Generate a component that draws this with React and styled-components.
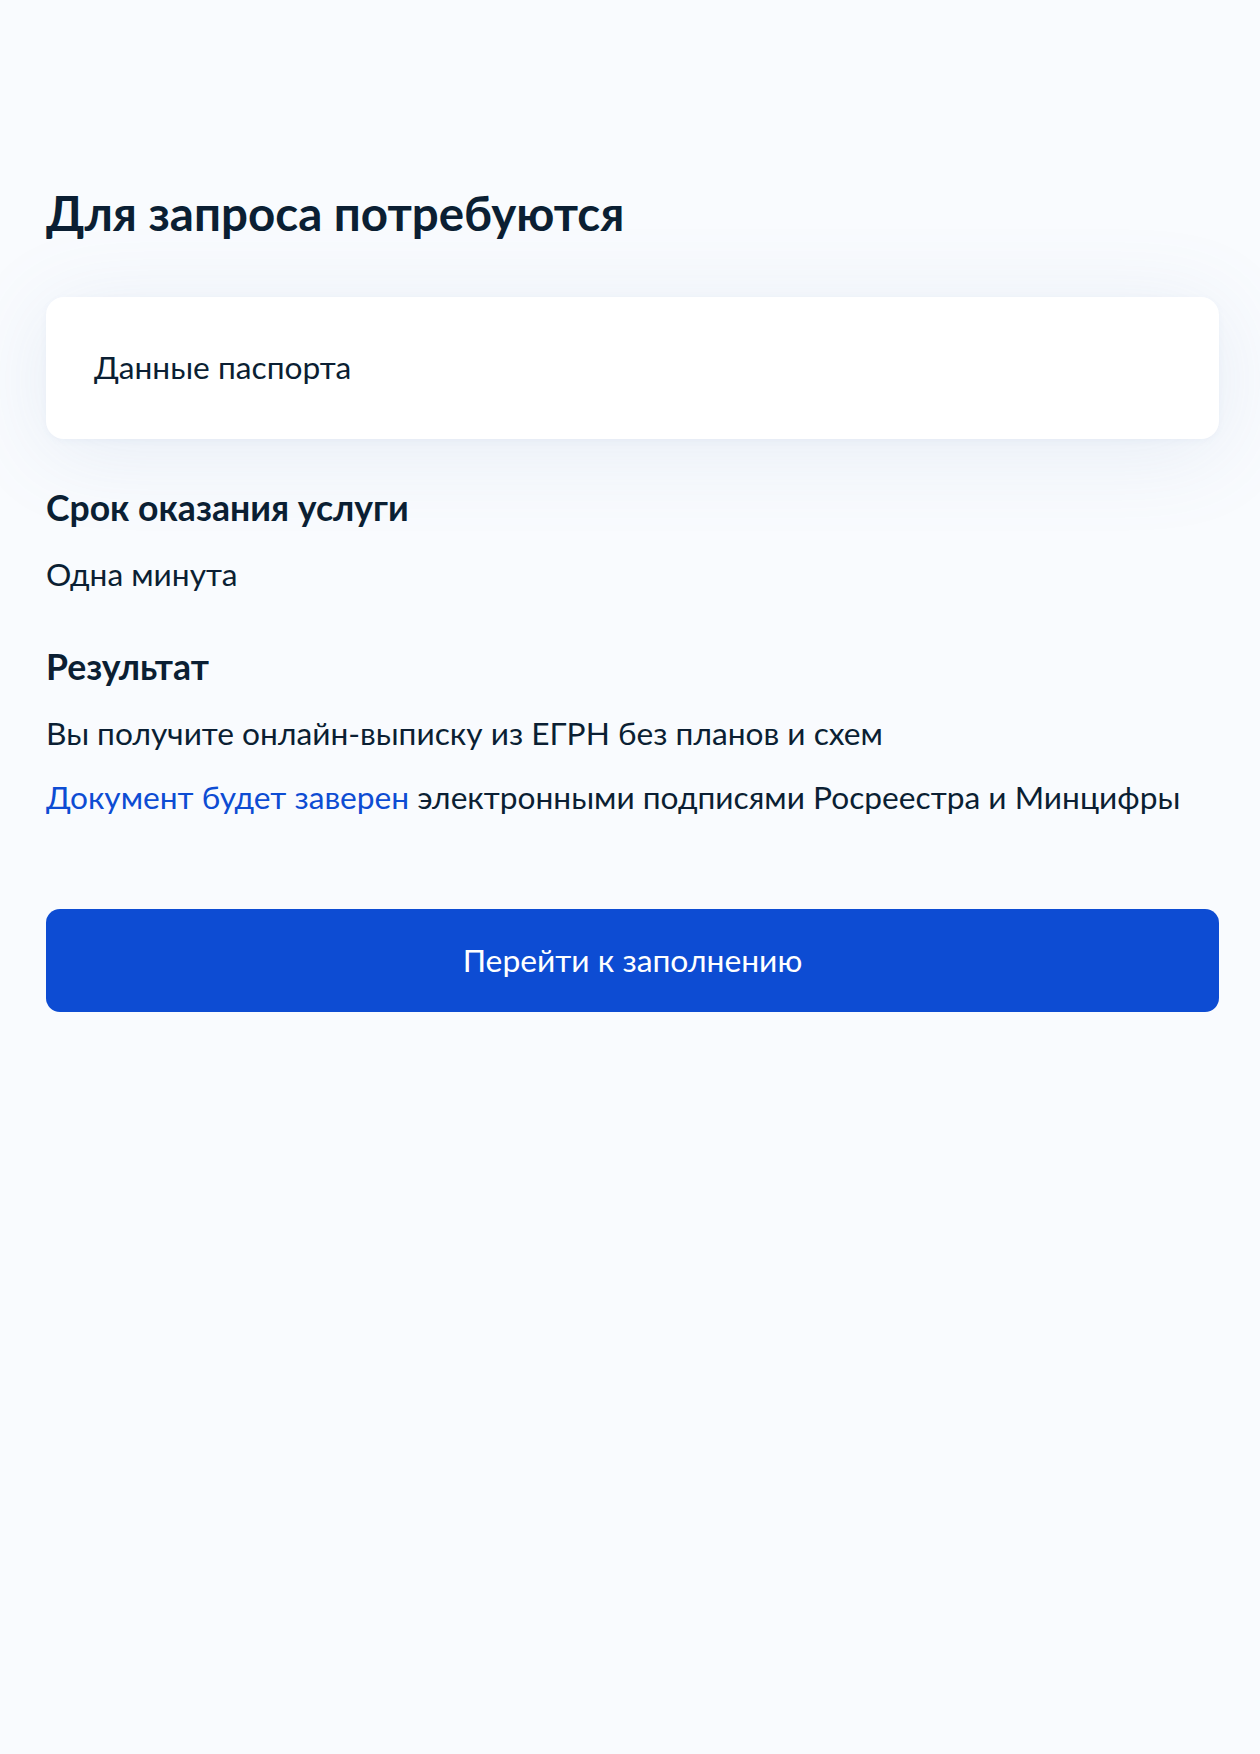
import React from 'react';
import styled, { createGlobalStyle } from 'styled-components';

const GlobalStyle = createGlobalStyle`
  html, body {
    margin: 0;
    padding: 0;
    background: #f9fbfe;
  }
  body {
    font-family: Lato, 'Noto Sans', sans-serif;
    color: #0b1f33;
  }
`;

const Page = styled.div`
  min-height: 1754px;
  padding: 185px 41px 0 46px;
  box-sizing: border-box;
  display: flex;
  flex-direction: column;
`;

const Title = styled.h1`
  margin: 0 0 56px;
  font-size: 47.5px;
  line-height: 56px;
  font-weight: 700;
`;

const Card = styled.div`
  height: 142px;
  padding: 0 48px 2px;
  box-sizing: border-box;
  display: flex;
  align-items: center;
  background: #ffffff;
  border-radius: 18px;
  box-shadow: 0 12px 90px rgba(102, 132, 180, 0.12), 0 2px 6px rgba(102, 132, 180, 0.06);
  font-size: 31.7px;
  line-height: 48px;
`;

const Section = styled.section`
  margin-top: ${(p) => p.$top}px;
  display: flex;
  flex-direction: column;
  gap: 16px;
`;

const Heading = styled.h3`
  margin: 0 0 4px;
  font-size: 35.6px;
  line-height: 44px;
  font-weight: 700;
`;

const Text = styled.p`
  margin: 0;
  font-size: 31.7px;
  line-height: 48px;
`;

const Link = styled.a`
  color: #0d4cd3;
  text-decoration: none;
`;

const Button = styled.button`
  margin-top: 88px;
  height: 103px;
  padding: 0 0 2px;
  border: none;
  border-radius: 14px;
  background: #0d4cd3;
  color: #ffffff;
  font-family: Lato, 'Noto Sans', sans-serif;
  font-size: 31.8px;
  cursor: pointer;
`;

const App = () => {
  return (
    <>
      <GlobalStyle />
      <Page>
        <Title>Для запроса потребуются</Title>
        <Card>Данные паспорта</Card>
        <Section $top={47}>
          <Heading>Срок оказания услуги</Heading>
          <Text>Одна минута</Text>
        </Section>
        <Section $top={47}>
          <Heading>Результат</Heading>
          <Text>Вы получите онлайн-выписку из ЕГРН без планов и схем</Text>
          <Text>
            <Link href="#">Документ будет заверен</Link> электронными подписями Росреестра и Минцифры
          </Text>
        </Section>
        <Button>Перейти к заполнению</Button>
      </Page>
    </>
  );
};

export default App;
